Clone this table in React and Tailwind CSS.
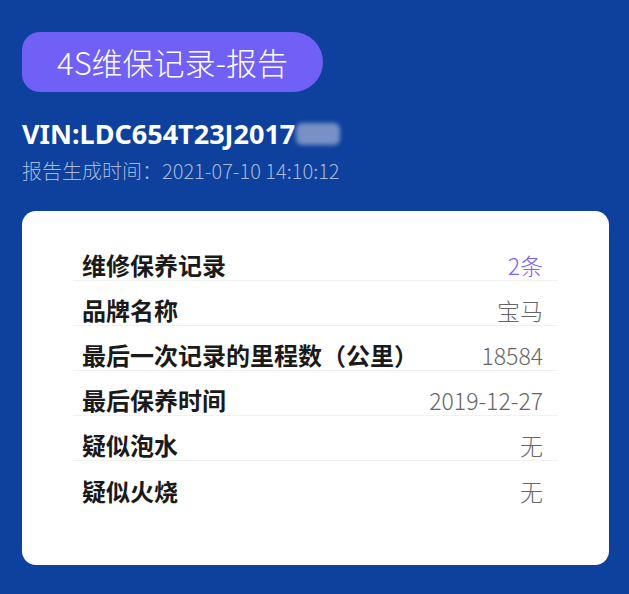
const rows = [
  { label: '维修保养记录', value: '2条', accent: true },
  { label: '品牌名称', value: '宝马' },
  { label: '最后一次记录的里程数（公里）', value: '18584' },
  { label: '最后保养时间', value: '2019-12-27' },
  { label: '疑似泡水', value: '无' },
  { label: '疑似火烧', value: '无', last: true },
];

export default function App() {
  return (
    <div className="min-h-[594px] w-full bg-[#0d419d] pl-[22px] pr-[20px] pt-[32px] pb-[30px] font-['Noto_Sans_CJK_SC','Noto_Sans',sans-serif]">
      <div className="flex">
        <div className="flex h-[60px] w-[301px] items-center justify-center rounded-l-[18px] rounded-r-[30px] bg-[#7160f5] text-[31px] font-light text-white">
          4S维保记录-报告
        </div>
      </div>

      <div className="mt-[25px] flex items-center text-[27px] font-bold leading-[34px] text-white">
        <span className="font-['Noto_Sans','Noto_Sans_CJK_SC',sans-serif]">VIN:LDC654T23J2017</span>
        <span className="ml-[1px] h-[22px] w-[44px] rounded-[6px] bg-[#7890c6] blur-[2px]" />
      </div>
      <div className="mt-[7px] text-[20px] font-light leading-[26px] text-[#a9b6d6]">
        报告生成时间：2021-07-10 14:10:12
      </div>

      <div className="mt-[27px] rounded-[14px] bg-white px-[51px] pt-[25px] pb-[59px]">
        {rows.map((r) => (
          <div
            key={r.label}
            className={`flex h-[45px] items-end justify-between pr-[15px] pl-[9px] ${r.last ? '' : 'border-b border-[#f1f1f1]'}`}
          >
            <span className="text-[24px] font-bold leading-[30px] text-[#1a1a1a]">{r.label}</span>
            <span className={`text-[23px] font-light leading-[30px] ${r.accent ? 'text-[#7b63f6]' : 'text-[#666666]'}`}>
              {r.value}
            </span>
          </div>
        ))}
      </div>
    </div>
  );
}
